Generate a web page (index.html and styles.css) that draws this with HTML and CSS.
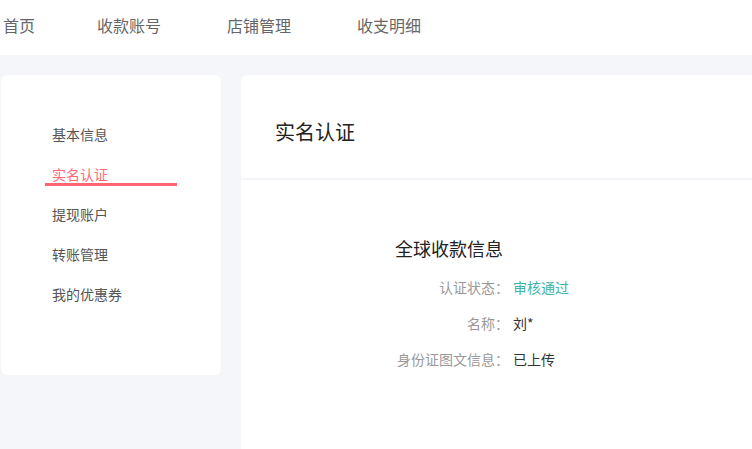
FILE: index.html
```html
<!DOCTYPE html>
<html lang="zh-CN">
<head>
  <meta charset="UTF-8">
  <meta name="viewport" content="width=device-width, initial-scale=1.0">
  <title>实名认证</title>
  <link rel="stylesheet" href="styles.css">
</head>
<body>

<div class="top-nav">
  <a class="nav-item first">首页</a>
  <a class="nav-item">收款账号</a>
  <a class="nav-item">店铺管理</a>
  <a class="nav-item">收支明细</a>
</div>

<div class="page">
  <div class="side-menu">
    <div class="menu-item"><span>基本信息</span></div>
    <div class="menu-item active"><span>实名认证</span></div>
    <div class="menu-item"><span>提现账户</span></div>
    <div class="menu-item"><span>转账管理</span></div>
    <div class="menu-item"><span>我的优惠券</span></div>
  </div>

  <div class="main-card">
    <div class="card-header">实名认证</div>
    <div class="info-section">
      <h3>全球收款信息</h3>
      <div class="info-row">
        <span class="info-label">认证状态：</span>
        <span class="info-value status-ok">审核通过</span>
      </div>
      <div class="info-row">
        <span class="info-label">名称：</span>
        <span class="info-value">刘*</span>
      </div>
      <div class="info-row">
        <span class="info-label">身份证图文信息：</span>
        <span class="info-value">已上传</span>
      </div>
    </div>
  </div>
</div>

</body>
</html>
```

FILE: styles.css
```css
body {
  margin: 0;
  font-family: "Noto Sans CJK SC", "Noto Sans", sans-serif;
  background-color: #f4f6f9;
  overflow: hidden;
}
.top-nav {
  height: 55px;
  background: #fff;
  display: flex;
  align-items: center;
  padding-left: 3px;
  padding-bottom: 6px;
  box-sizing: border-box;
}
.nav-item {
  font-size: 16px;
  color: #666;
  line-height: 24px;
  margin-right: 66px;
  cursor: pointer;
}
.nav-item.first {
  margin-right: 62px;
}
.page {
  display: flex;
  gap: 20px;
  padding: 20px 0 0 1px;
}
.side-menu {
  width: 220px;
  height: 300px;
  flex-shrink: 0;
  background: #fff;
  border-radius: 6px;
  padding-top: 40px;
  box-sizing: border-box;
}
.menu-item {
  margin-left: 44px;
  width: 132px;
  height: 40px;
  box-sizing: border-box;
  padding: 10px 0 0 7px;
}
.menu-item span {
  display: block;
  font-size: 14px;
  line-height: 19px;
  color: #555;
}
.menu-item.active {
  border-bottom: 3px solid #ff6570;
  height: 31px;
  margin-bottom: 9px;
}
.menu-item.active span {
  color: #ff6b78;
}
.main-card {
  flex: 1;
  height: 374px;
  background: #fff;
  border-radius: 6px 0 0 0;
}
.card-header {
  padding: 43px 0 32px 34px;
  font-size: 20px;
  line-height: 28px;
  color: #222;
  border-bottom: 2px solid #f3f5f8;
}
.info-section {
  padding: 55px 0 0 154px;
}
.info-section h3 {
  margin: 0 0 8px;
  font-size: 18px;
  font-weight: normal;
  line-height: 26px;
  color: #222;
}
.info-row {
  display: flex;
  align-items: center;
  height: 36px;
}
.info-label {
  width: 114px;
  text-align: right;
  font-size: 14px;
  color: #999;
}
.info-value {
  margin-left: 4px;
  font-size: 14px;
  color: #333;
}
.status-ok {
  color: #3cb4a8;
}
```
